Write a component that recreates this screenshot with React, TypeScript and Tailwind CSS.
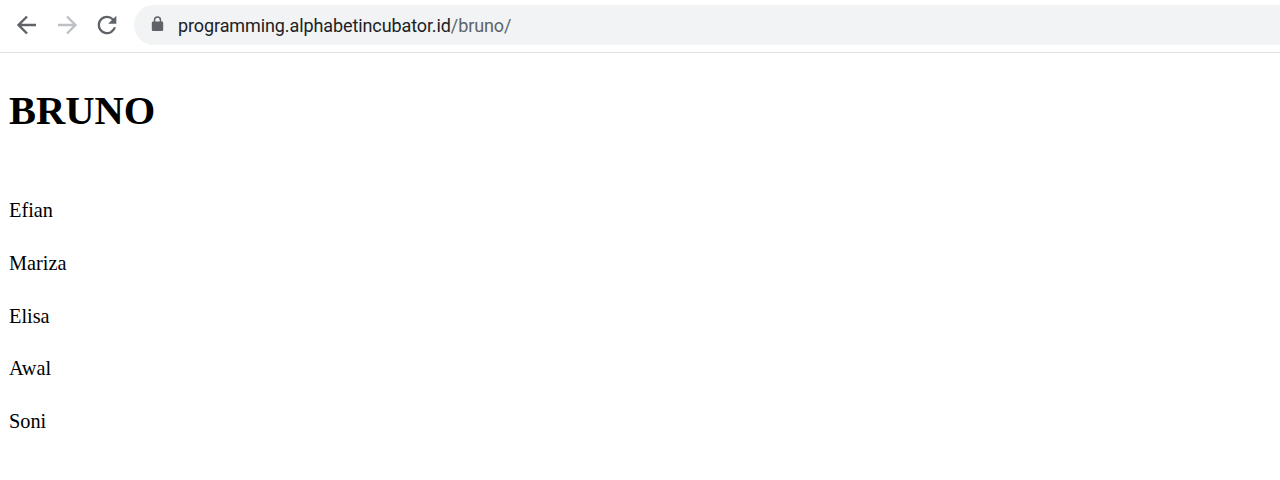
const names = ["Efian", "Mariza", "Elisa", "Awal", "Soni"];

export default function App() {
  return (
    <div className="min-h-[480px] bg-white overflow-hidden">
      <div className="h-[53px] flex items-start pt-[5px] border-b border-[#dfe1e5] bg-white">
        <div className="flex items-center h-10 w-[134px] shrink-0">
          <svg className="ml-[15px] w-[24px] h-[24px]" viewBox="0 0 24 24" fill="none" stroke="#5f6368" strokeWidth="2.4">
            <path d="M21 12H4M12 3.500 3.500 12l8.500 8.500" />
          </svg>
          <svg className="ml-[16px] w-[24px] h-[24px]" viewBox="0 0 24 24" fill="none" stroke="#bdc1c6" strokeWidth="2.4">
            <path d="M3 12h17M12 3.500l8.500 8.500-8.500 8.500" />
          </svg>
          <svg className="ml-[14px] w-[28px] h-[28px]" viewBox="0 0 24 24" fill="#5f6368">
            <path d="M17.650 6.350A7.960 7.960 0 0 0 12 4a8 8 0 1 0 7.730 10h-2.080A6 6 0 1 1 12 6c1.660 0 3.140.690 4.220 1.780L13 11h7V4l-2.350 2.350z" />
          </svg>
        </div>
        <div className="flex-1 h-10 bg-[#f1f3f4] rounded-l-[20px] flex items-center pl-[17px]">
          <svg className="w-[13px] h-[16px] shrink-0 -mt-[3px]" viewBox="0 0 13 16" fill="#5f6368">
            <path d="M11 5.500h-.8V4a3.700 3.700 0 0 0-7.400 0v1.500H2a1.200 1.200 0 0 0-1.200 1.200v7.100A1.200 1.200 0 0 0 2 15h9a1.200 1.200 0 0 0 1.200-1.200V6.700A1.200 1.200 0 0 0 11 5.500zM4.300 4a2.200 2.200 0 0 1 4.400 0v1.500H4.300V4z" />
          </svg>
          <div className="ml-[14px] mt-[2px] text-[18px] leading-[24px] font-['Roboto','Liberation_Sans',sans-serif] tracking-[-0.1px]">
            <span className="text-[#202124]">programming.alphabetincubator.id</span>
            <span className="text-[#5f6368]">/bruno/</span>
          </div>
        </div>
      </div>
      <div className="pl-[9px] font-['Liberation_Serif',serif] text-black">
        <h1 className="text-[40.500px] leading-[46px] font-bold mt-[35px] mb-[64px]">BRUNO</h1>
        <div className="flex flex-col gap-[28.750px]">
          {names.map((n) => (
            <p key={n} className="text-[20.300px] leading-[24px]">{n}</p>
          ))}
        </div>
      </div>
    </div>
  );
}
